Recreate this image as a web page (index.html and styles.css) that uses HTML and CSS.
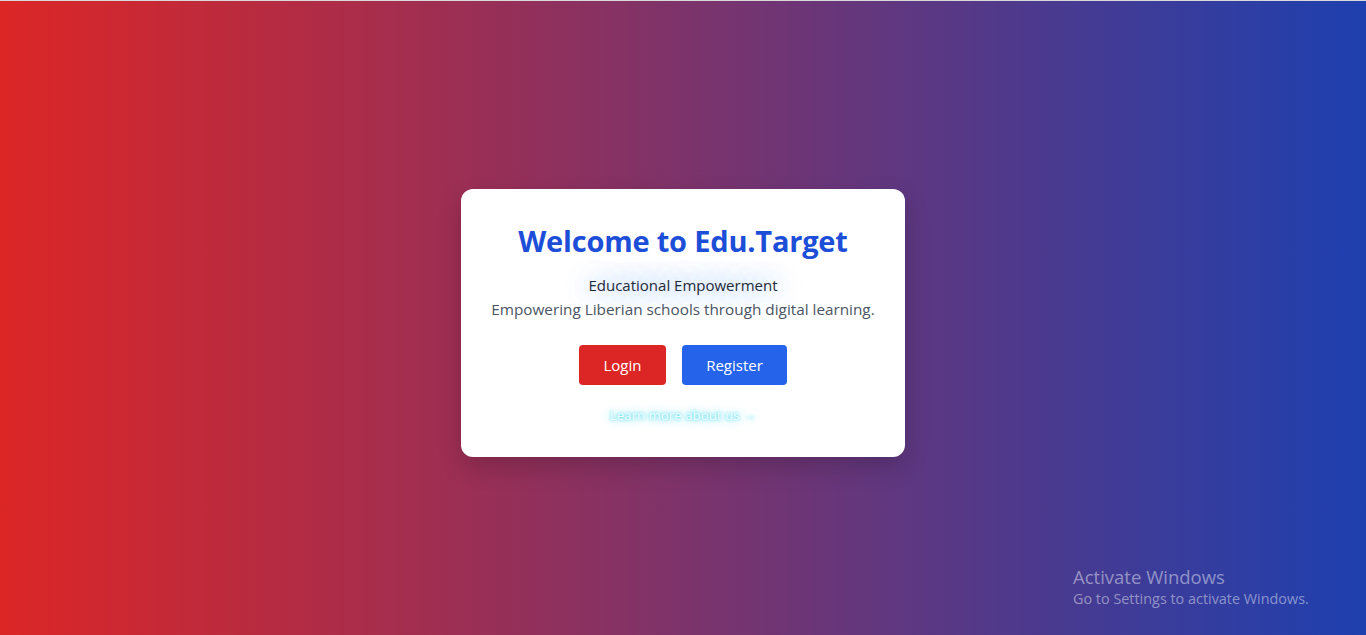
FILE: index.html
```html
<!DOCTYPE html>
<html lang="en">
<head>
<meta charset="utf-8">
<title>Edu.Target</title>
<link rel="stylesheet" href="styles.css">
</head>
<body>
<main class="page">
  <section class="card">
    <h1 class="title">Welcome to Edu.Target</h1>
    <p class="tagline">Educational Empowerment</p>
    <p class="desc">Empowering Liberian schools through digital learning.</p>
    <div class="actions">
      <a class="btn btn-red" href="#">Login</a>
      <a class="btn btn-blue" href="#">Register</a>
    </div>
    <a class="learn" href="#">Learn more about us →</a>
  </section>
  <div class="watermark">
    <div class="wm-title">Activate Windows</div>
    <div class="wm-sub">Go to Settings to activate Windows.</div>
  </div>
</main>
</body>
</html>
```
FILE: styles.css
```css
* { box-sizing: border-box; }
html, body { margin: 0; height: 100%; }
body {
  font-family: "Open Sans", "Noto Sans", sans-serif;
  border-top: 1px solid #d9d9d9;
}
.page {
  position: relative;
  height: 634px;
  background: linear-gradient(to right, #dc2626, #1e40af);
  display: flex;
  align-items: flex-start;
  justify-content: center;
  padding-top: 188px;
}
.card {
  position: relative;
  z-index: 0;
  width: 444px;
  background: #fff;
  border-radius: 12px;
  padding: 34px 24px 32px;
  text-align: center;
  box-shadow: 0 10px 25px rgba(0,0,0,0.18);
  display: flex;
  flex-direction: column;
  align-items: center;
}
.title {
  margin: 0 0 14px;
  font-size: 29px;
  line-height: 36px;
  font-weight: 700;
  color: #1d4ed8;
  letter-spacing: -0.2px;
}
.tagline {
  margin: 0;
  font-size: 15px;
  line-height: 24px;
  color: #1f2937;
  text-shadow: 0 0 22px rgba(96,165,250,0.55);
  position: relative;
}
.tagline::before {
  content: "";
  position: absolute;
  left: -8px;
  right: -8px;
  top: 2px;
  bottom: 2px;
  border-radius: 50%;
  background: rgba(219,234,254,0.55);
  filter: blur(10px);
  z-index: -1;
}
.desc {
  margin: 0;
  font-size: 15.3px;
  line-height: 24px;
  color: #4b5563;
}
.actions {
  display: flex;
  gap: 16px;
  margin-top: 24px;
}
.btn {
  display: block;
  height: 40px;
  line-height: 40px;
  border-radius: 4px;
  color: #fff;
  text-decoration: none;
  font-size: 15px;
}
.btn-red { background: #dc2626; width: 87px; }
.btn-blue { background: #2563eb; width: 105px; }
.learn {
  margin-top: 20px;
  font-size: 13.3px;
  line-height: 20px;
  color: #f0feff;
  text-decoration: none;
  text-shadow: 0 0 3px rgba(34,211,238,0.9), 0 0 8px rgba(34,211,238,0.7);
}
.watermark {
  position: absolute;
  left: 1073px;
  top: 564px;
  color: rgba(255,255,255,0.45);
  font-family: "Open Sans", sans-serif;
}
.wm-title { font-size: 18.5px; line-height: 24px; }
.wm-sub { font-size: 14.4px; line-height: 20px; }
```
